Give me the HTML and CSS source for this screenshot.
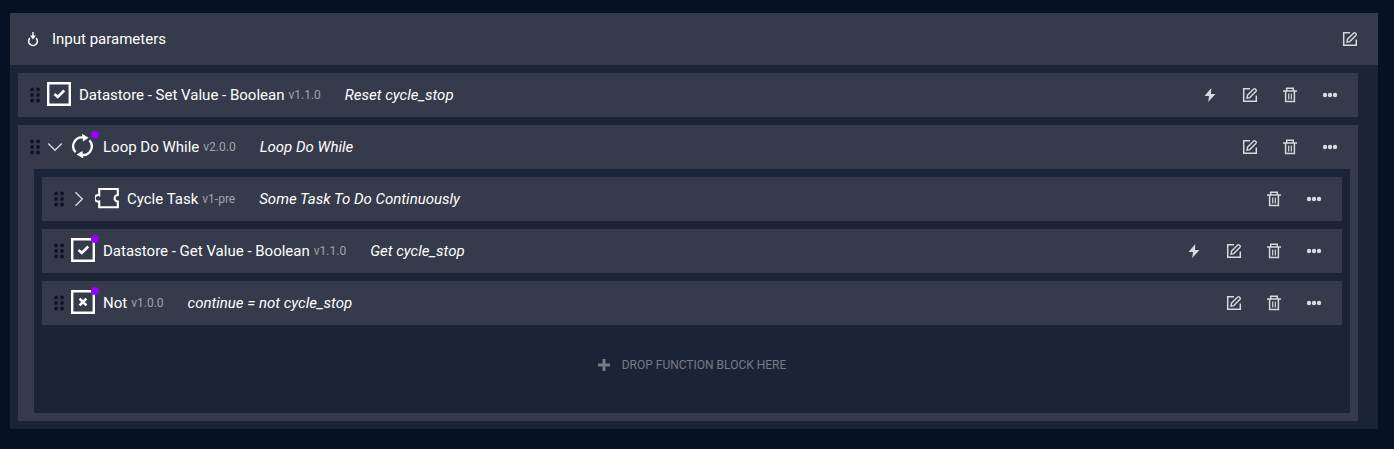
FILE: index.html
```html
<!DOCTYPE html>
<html lang="en">
<head>
  <meta charset="UTF-8">
  <meta name="viewport" content="width=device-width, initial-scale=1.0">
  <title>Function blocks</title>
  <link rel="stylesheet" href="styles.css">
</head>
<body>
  <!-- icon shapes shared by the rows -->
  <svg class="sprite" aria-hidden="true">
    <symbol id="grip" viewBox="0 0 12 16">
      <circle cx="3" cy="2.5" r="1.9"/><circle cx="9" cy="2.5" r="1.9"/>
      <circle cx="3" cy="8" r="1.9"/><circle cx="9" cy="8" r="1.9"/>
      <circle cx="3" cy="13.5" r="1.9"/><circle cx="9" cy="13.5" r="1.9"/>
    </symbol>
    <symbol id="edit" viewBox="0 0 16 16">
      <path d="M8 1.7H1.7V14.3H14.3V8.5" fill="none" stroke="currentColor" stroke-width="1.5"/>
      <path d="M5 11.2L5.5 8.2L11.7 2Q12.5 1.3 13.3 2L14 2.7Q14.7 3.5 14 4.3L7.8 10.6Z" fill="none" stroke="currentColor" stroke-width="1.4"/>
    </symbol>
    <symbol id="trash" viewBox="0 0 16 16">
      <path d="M1 4H15M4.7 4V1.3H11.3V4M3.6 4V14.6H12.4V4" fill="none" stroke="currentColor" stroke-width="1.5"/>
      <path d="M6.7 6.5V12.5M9.3 6.5V12.5" fill="none" stroke="currentColor" stroke-width="1.2"/>
    </symbol>
    <symbol id="bolt" viewBox="0 0 16 16">
      <path d="M9.3 1L2.5 9H7L6.2 15L13.5 7H9Z"/>
    </symbol>
    <symbol id="more" viewBox="0 0 16 16">
      <circle cx="3" cy="8" r="2.2"/><circle cx="8" cy="8" r="2.2"/><circle cx="13" cy="8" r="2.2"/>
    </symbol>
    <symbol id="down" viewBox="0 0 16 16">
      <path d="M1.2 4.5L8 11.3L14.8 4.5" fill="none" stroke="currentColor" stroke-width="1.4"/>
    </symbol>
    <symbol id="right" viewBox="0 0 16 16">
      <path d="M4.5 1.2L11.3 8L4.5 14.8" fill="none" stroke="currentColor" stroke-width="1.4"/>
    </symbol>
    <symbol id="check" viewBox="0 0 24 24">
      <path d="M1.2 1.2H22.8V22.8H1.2Z" fill="none" stroke="currentColor" stroke-width="2.4"/>
      <path d="M7.5 12L10.8 15L17.2 8.5" fill="none" stroke="currentColor" stroke-width="2.5"/>
    </symbol>
    <symbol id="cross" viewBox="0 0 24 24">
      <path d="M1.2 1.2H22.8V22.8H1.2Z" fill="none" stroke="currentColor" stroke-width="2.4"/>
      <path d="M8.6 8.6L15.4 15.4M15.4 8.6L8.6 15.4" fill="none" stroke="currentColor" stroke-width="2.6"/>
    </symbol>
    <symbol id="loop" viewBox="0 0 24 24">
      <path d="M4.6 18.2A8.8 8.8 0 0 1 12 3.4M18.4 6.2A8.8 8.8 0 0 1 11.5 21" fill="none" stroke="currentColor" stroke-width="2.3"/>
      <path d="M11 -0.2L17.6 3.8L12 7.4ZM12.4 24.6L5.6 20.6L11.4 17Z"/>
    </symbol>
    <symbol id="puzzle" viewBox="0 0 24 24">
      <path d="M4.2 3H22.8V9A3.2 3.2 0 1 0 22.8 15.5V21.2H4.2V15.4A3.3 3.3 0 1 1 4.2 9.2Z" fill="none" stroke="currentColor" stroke-width="2.1"/>
    </symbol>
    <symbol id="input" viewBox="0 0 16 16">
      <path d="M4.9 7.2A4.3 4.3 0 1 0 11.1 7.2" fill="none" stroke="currentColor" stroke-width="1.7"/>
      <path d="M7.3 1H8.7V4.6H11L8 8.4L5 4.6H7.3Z"/>
    </symbol>
    <symbol id="plus" viewBox="0 0 12 12">
      <path d="M4.5 0H7.5V4.5H12V7.5H7.5V12H4.5V7.5H0V4.5H4.5Z"/>
    </symbol>
  </svg>

  <main class="panel">
    <header class="panel-header">
      <svg class="input-icon"><use href="#input"/></svg>
      <h1 class="title">Input parameters</h1>
      <div class="actions">
        <button class="action" aria-label="Edit"><svg><use href="#edit"/></svg></button>
      </div>
    </header>

    <div class="blocks">
      <div class="row">
        <svg class="grip"><use href="#grip"/></svg>
        <span class="block-icon"><svg><use href="#check"/></svg></span>
        <span class="title">Datastore - Set Value - Boolean</span>
        <span class="version">v1.1.0</span>
        <em class="note">Reset cycle_stop</em>
        <div class="actions">
          <button class="action" aria-label="Run"><svg><use href="#bolt"/></svg></button>
          <button class="action" aria-label="Edit"><svg><use href="#edit"/></svg></button>
          <button class="action" aria-label="Delete"><svg><use href="#trash"/></svg></button>
          <button class="action" aria-label="More"><svg><use href="#more"/></svg></button>
        </div>
      </div>

      <section class="loop">
        <div class="row">
          <svg class="grip"><use href="#grip"/></svg>
          <button class="toggle" aria-label="Collapse"><svg><use href="#down"/></svg></button>
          <span class="block-icon marked"><svg><use href="#loop"/></svg></span>
          <span class="title">Loop Do While</span>
          <span class="version">v2.0.0</span>
          <em class="note">Loop Do While</em>
          <div class="actions">
            <button class="action" aria-label="Edit"><svg><use href="#edit"/></svg></button>
            <button class="action" aria-label="Delete"><svg><use href="#trash"/></svg></button>
            <button class="action" aria-label="More"><svg><use href="#more"/></svg></button>
          </div>
        </div>

        <div class="loop-body">
          <div class="row">
            <svg class="grip"><use href="#grip"/></svg>
            <button class="toggle" aria-label="Expand"><svg><use href="#right"/></svg></button>
            <span class="block-icon"><svg><use href="#puzzle"/></svg></span>
            <span class="title">Cycle Task</span>
            <span class="version">v1-pre</span>
            <em class="note">Some Task To Do Continuously</em>
            <div class="actions">
              <button class="action" aria-label="Delete"><svg><use href="#trash"/></svg></button>
              <button class="action" aria-label="More"><svg><use href="#more"/></svg></button>
            </div>
          </div>
          <div class="row">
            <svg class="grip"><use href="#grip"/></svg>
            <span class="block-icon marked"><svg><use href="#check"/></svg></span>
            <span class="title">Datastore - Get Value - Boolean</span>
            <span class="version">v1.1.0</span>
            <em class="note">Get cycle_stop</em>
            <div class="actions">
              <button class="action" aria-label="Run"><svg><use href="#bolt"/></svg></button>
              <button class="action" aria-label="Edit"><svg><use href="#edit"/></svg></button>
              <button class="action" aria-label="Delete"><svg><use href="#trash"/></svg></button>
              <button class="action" aria-label="More"><svg><use href="#more"/></svg></button>
            </div>
          </div>
          <div class="row">
            <svg class="grip"><use href="#grip"/></svg>
            <span class="block-icon marked"><svg><use href="#cross"/></svg></span>
            <span class="title">Not</span>
            <span class="version">v1.0.0</span>
            <em class="note">continue = not cycle_stop</em>
            <div class="actions">
              <button class="action" aria-label="Edit"><svg><use href="#edit"/></svg></button>
              <button class="action" aria-label="Delete"><svg><use href="#trash"/></svg></button>
              <button class="action" aria-label="More"><svg><use href="#more"/></svg></button>
            </div>
          </div>
          <div class="drop">
            <svg class="plus"><use href="#plus"/></svg>
            <span>Drop function block here</span>
          </div>
        </div>
      </section>
    </div>
  </main>
</body>
</html>
```
FILE: styles.css
```css
* {
  box-sizing: border-box;
}
body {
  margin: 0;
  padding: 13px 16px 20px 10px;
  background-color: #061124;
  color: #fff;
  font-family: Roboto, "Liberation Sans", sans-serif;
  font-size: 15px;
  line-height: 20px;
}
svg {
  display: block;
  fill: currentColor;
}
.sprite {
  display: none;
}
.panel {
  background-color: #1b2336;
}
.panel-header {
  display: flex;
  align-items: center;
  height: 52px;
  padding: 0 8px 0 15px;
  background-color: #353b4b;
}
.input-icon {
  width: 16px;
  height: 16px;
  margin-right: 11px;
}
.title {
  margin: 0;
  font-size: 15px;
  font-weight: 400;
  white-space: nowrap;
}
.blocks {
  display: flex;
  flex-direction: column;
  gap: 8px;
  padding: 8px 20px 8px 8px;
}
.row {
  display: flex;
  align-items: center;
  height: 44px;
  padding: 0 8px 0 11px;
  background-color: #353b4b;
}
.grip {
  flex: none;
  width: 12px;
  height: 16px;
  margin-right: 6px;
  color: #0b142a;
}
.toggle {
  width: 16px;
  height: 16px;
  margin-right: 8px;
  padding: 0;
  border: none;
  background: none;
  color: #d7d8db;
  cursor: pointer;
}
.toggle svg {
  width: 16px;
  height: 16px;
}
.block-icon {
  position: relative;
  flex: none;
  width: 24px;
  height: 24px;
  margin: 0 8px 2px 0;
}
.block-icon svg {
  width: 24px;
  height: 24px;
  overflow: visible;
}
.block-icon symbol {
  overflow: visible;
}
/* purple dot on the icon corner */
.marked::after {
  content: "";
  position: absolute;
  top: -3px;
  right: -4px;
  width: 8px;
  height: 8px;
  border-radius: 50%;
  background-color: #9b00ff;
}
.version {
  margin-left: 4px;
  color: #a0a3ab;
  font-size: 12px;
  white-space: nowrap;
}
.note {
  margin-left: 24px;
  white-space: nowrap;
}
.actions {
  display: flex;
  margin-left: auto;
}
.action {
  display: flex;
  align-items: center;
  justify-content: center;
  width: 40px;
  height: 40px;
  padding: 0;
  border: none;
  background: none;
  color: #d7d8db;
  cursor: pointer;
}
.action svg {
  width: 16px;
  height: 16px;
}
.action:hover,
.toggle:hover {
  color: #fff;
}
.loop {
  padding: 0 8px 8px 0;
  background-color: #353b4b;
}
.loop > .row {
  margin-right: -8px;
}
.loop-body {
  display: flex;
  flex-direction: column;
  gap: 8px;
  margin-left: 16px;
  padding: 8px 8px 16px;
  background-color: #1b2336;
}
.drop {
  display: flex;
  align-items: center;
  justify-content: center;
  gap: 12px;
  height: 64px;
  color: #777b86;
  font-size: 12px;
  text-transform: uppercase;
}
.plus {
  width: 12px;
  height: 12px;
}
```
